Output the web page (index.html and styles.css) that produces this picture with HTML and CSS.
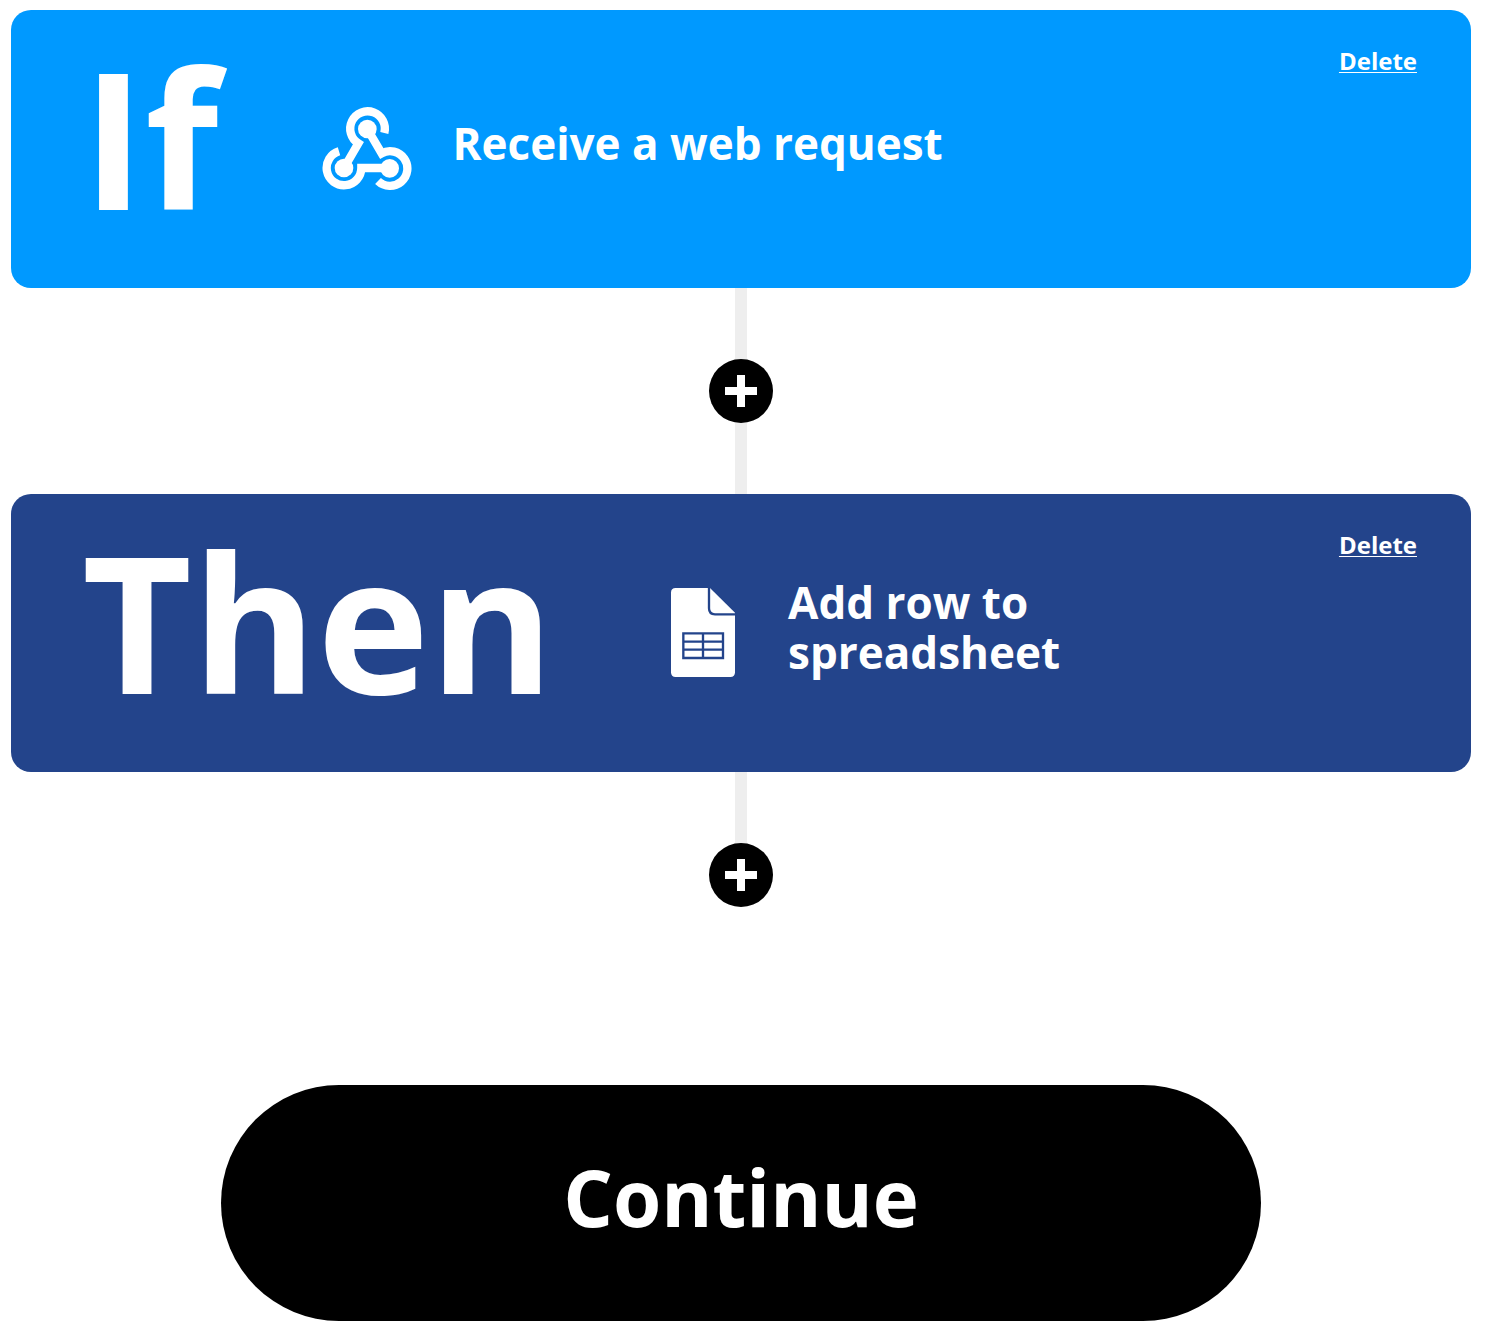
FILE: index.html
```html
<!DOCTYPE html>
<html lang="en">
<head>
<meta charset="utf-8">
<title>Create an applet</title>
<link rel="stylesheet" href="styles.css">
</head>
<body>
<main class="composer">
  <section class="step step-if">
    <h2 class="step-title">If</h2>
    <svg class="step-icon" viewBox="43 42 270 270" aria-hidden="true">
      <g fill="currentColor">
        <circle cx="179" cy="117" r="28"/>
        <circle cx="109" cy="234" r="28"/>
        <circle cx="246" cy="235" r="28"/>
      </g>
      <g fill="none" stroke="currentColor" stroke-width="25">
        <path d="M230 129A52 52 0 1 0 152 160L109 234"/>
        <path d="M179 117L222 190A52 52 0 1 1 211 273"/>
        <path d="M94 184A52 52 0 1 0 161 234H246"/>
      </g>
    </svg>
    <p class="step-label">Receive a web request</p>
    <a class="step-delete" href="#">Delete</a>
  </section>

  <div class="connector">
    <span class="line"></span>
    <button class="add" type="button" aria-label="Add a step">
      <svg viewBox="0 0 32 32" aria-hidden="true"><path d="M12 0h8v12h12v8H20v12h-8V20H0v-8h12z" fill="currentColor"/></svg>
    </button>
    <span class="line"></span>
  </div>

  <section class="step step-then">
    <h2 class="step-title">Then</h2>
    <svg class="step-icon" viewBox="18 54 270 270" aria-hidden="true">
      <path fill="currentColor" d="M71 54H174L249 128V307Q249 321 235 321H71Q57 321 57 307V68Q57 54 71 54Z"/>
      <path class="sheet-cut" stroke-width="7" d="M171 50V115Q171 133 189 133H253"/>
      <path class="sheet-cut" stroke-width="7" d="M94 190H213V264H94ZM153 190V264M94 215H213M94 239H213"/>
    </svg>
    <p class="step-label">Add row to spreadsheet</p>
    <a class="step-delete" href="#">Delete</a>
  </section>

  <div class="connector">
    <span class="line"></span>
    <button class="add" type="button" aria-label="Add a step">
      <svg viewBox="0 0 32 32" aria-hidden="true"><path d="M12 0h8v12h12v8H20v12h-8V20H0v-8h12z" fill="currentColor"/></svg>
    </button>
  </div>

  <button class="continue" type="button">Continue</button>
</main>
</body>
</html>
```
FILE: styles.css
```css
* {
  box-sizing: border-box;
}

body {
  margin: 0;
  background: #fff;
  color: #fff;
  font-family: "Open Sans", "Noto Sans", sans-serif;
  font-weight: 700;
}

.composer {
  display: flex;
  flex-direction: column;
  align-items: center;
  padding: 10px 15px 8px 11px;
}

.step {
  display: flex;
  align-items: center;
  width: 100%;
  min-height: 278px;
  padding: 36px 54px 36px 71px;
  border-radius: 20px;
}

.step-if {
  background: #09f;
}

.step-then {
  background: #23448b;
}

.step-title {
  margin: 0;
  padding-bottom: 24px;
  font-size: 190px;
  font-weight: 700;
  line-height: 180px;
}

.step-icon {
  flex: none;
  width: 90px;
  height: 90px;
  margin: 0 40px 0 104px;
}

.sheet-cut {
  fill: none;
  stroke: #23448b;
}

.step-label {
  flex: 1;
  margin: 0;
  padding-bottom: 12px;
  font-size: 44px;
  line-height: 50px;
}

.step-delete {
  align-self: flex-start;
  margin-left: 60px;
  color: inherit;
  font-size: 24px;
  line-height: 30px;
  text-decoration-thickness: 1px;
  text-underline-offset: 2px;
}

.connector {
  display: flex;
  flex-direction: column;
  align-items: center;
}

.line {
  width: 12px;
  height: 71px;
  background: #eee;
}

.add {
  display: grid;
  place-items: center;
  width: 64px;
  height: 64px;
  padding: 0;
  border: 0;
  border-radius: 50%;
  background: #000;
  color: #fff;
}

.add svg {
  width: 32px;
  height: 32px;
}

.continue {
  width: 100%;
  max-width: 1040px;
  margin-top: 178px;
  padding: 64px 40px 76px;
  border: 0;
  border-radius: 118px;
  background: #000;
  color: #fff;
  font: inherit;
  font-size: 78px;
  line-height: 96px;
}
```
